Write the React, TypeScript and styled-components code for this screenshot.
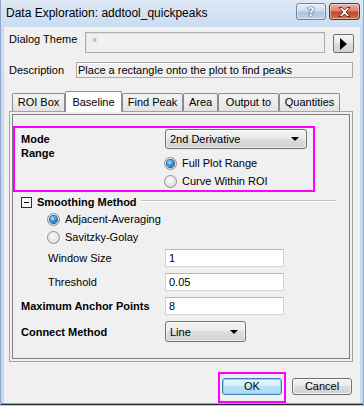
import React from "react";
import styled, { createGlobalStyle } from "styled-components";

const GlobalStyle = createGlobalStyle`
  html, body {
    margin: 0;
    padding: 0;
    background: #c4d9ef;
  }
  body {
    font-family: "Liberation Sans", Arial, sans-serif;
    font-size: 11px;
    color: #000;
  }
  * {
    box-sizing: border-box;
  }
`;

const Window = styled.div`
  width: 364px;
  height: 406px;
  display: flex;
  flex-direction: column;
  background: linear-gradient(180deg, #dfe9f6 0px, #c9dcf1 27px, #c4d9ef 100%);
  border-left: 1px solid #8fa8c6;
  border-right: 1px solid #8fa8c6;
  overflow: hidden;
`;

const TitleBar = styled.div`
  height: 27px;
  flex: none;
  display: flex;
  align-items: flex-start;
  padding: 0 3px 0 5px;
`;

const Title = styled.div`
  flex: 1;
  font-size: 12px;
  line-height: 27px;
  color: #000;
  white-space: nowrap;
`;

const CaptionButton = styled.div<{ $close?: boolean; $w: number }>`
  width: ${(p) => p.$w}px;
  height: 17px;
  margin-top: 3px;
  margin-left: 3px;
  border-radius: 3px;
  display: flex;
  align-items: center;
  justify-content: center;
  border: 1px solid ${(p) => (p.$close ? "#6e2a20" : "#6c84a3")};
  background: ${(p) =>
    p.$close
      ? "linear-gradient(180deg, #eeb3a6 0%, #dc806c 45%, #c6452b 55%, #d2704f 100%)"
      : "linear-gradient(180deg, #e8f0f9 0%, #cddced 45%, #adc4df 55%, #bcd2ea 100%)"};
  box-shadow: inset 0 0 0 1px rgba(255, 255, 255, 0.45);
`;

const HelpGlyph = styled.span`
  font-family: "DejaVu Sans", sans-serif;
  font-weight: bold;
  font-size: 13px;
  line-height: 13px;
  color: #f4f6fa;
  text-shadow: 0 0 1px #2f4360, 0 0 1px #2f4360, 0 0 1px #2f4360;
`;

const Body = styled.div`
  flex: 1;
  margin: 0 3px;
  background: #f0f0f0;
  padding: 5px 6px 0 5px;
  display: flex;
  flex-direction: column;
`;

const FrameBottom = styled.div`
  height: 3px;
  flex: none;
  background: linear-gradient(180deg, #8ea9c9 0 1px, #1b2836 1px 2px, #b9d0ea 2px);
`;

const ThemeRow = styled.div`
  display: flex;
  height: 20px;
  align-items: flex-start;
`;

const FieldLabel = styled.div<{ $w: number }>`
  width: ${(p) => p.$w}px;
  flex: none;
  line-height: 13px;
  padding-top: 1px;
  white-space: nowrap;
`;

const ThemeBox = styled.div`
  flex: 1;
  height: 21px;
  border: 1px solid #adadad;
  box-shadow: inset 1px 1px 0 #e2e2e2;
  background: #f0f0f0;
  padding: 2px 0 0 6px;
  font-size: 9px;
  line-height: 10px;
  color: #9a9a9a;
`;

const ArrowButton = styled.div`
  width: 21px;
  height: 19px;
  flex: none;
  margin: 2px 0 0 8px;
  border: 1px solid #707070;
  border-radius: 2px;
  background: linear-gradient(180deg, #f6f6f6 0%, #ebebeb 45%, #dddddd 50%, #d2d2d2 100%);
  display: flex;
  align-items: center;
  justify-content: center;
`;

const DescRow = styled.div`
  display: flex;
  height: 16px;
  margin-top: 10px;
`;

const DescBox = styled.div`
  flex: 1;
  margin-right: 1px;
  border: 1px solid #a9a9a9;
  box-shadow: inset 1px 1px 0 #ffffff;
  background: #f0f0f0;
  padding-left: 1px;
  line-height: 14px;
  white-space: nowrap;
`;

const TabStrip = styled.div`
  display: flex;
  align-items: flex-end;
  height: 20px;
  margin-top: 13px;
  padding-left: 3px;
  position: relative;
  z-index: 1;
`;

const Tab = styled.div<{ $active?: boolean; $w: number }>`
  width: ${(p) => p.$w}px;
  flex: none;
  text-align: center;
  border: 1px solid #898c95;
  border-bottom: none;
  border-radius: 2px 2px 0 0;
  white-space: nowrap;
  height: ${(p) => (p.$active ? 21 : 18)}px;
  margin-bottom: ${(p) => (p.$active ? -1 : 0)}px;
  line-height: ${(p) => (p.$active ? 18 : 17)}px;
  padding-top: ${(p) => (p.$active ? 1 : 0)}px;
  background: ${(p) =>
    p.$active ? "#ffffff" : "linear-gradient(180deg, #f4f4f4 0%, #ececec 50%, #e2e2e2 100%)"};
`;

const Panel = styled.div`
  height: 251px;
  margin-right: 1px;
  border: 1px solid #a3a3a3;
  padding: 2px;
  display: flex;
`;

const PanelInner = styled.div`
  flex: 1;
  border: 1px solid #7e7e7e;
  display: flex;
  flex-direction: column;
`;

const Highlight = styled.div`
  border: 2px solid #ff00ff;
`;

const ModeBox = styled(Highlight)`
  width: 302px;
  height: 66px;
  margin-top: 11px;
  padding: 1px 6px 0 6px;
`;

const Row = styled.div<{ $top?: number; $h?: number; $indent?: number }>`
  display: flex;
  align-items: center;
  height: ${(p) => p.$h ?? 18}px;
  margin-top: ${(p) => p.$top ?? 0}px;
  padding-left: ${(p) => p.$indent ?? 0}px;
`;

const Label = styled.div<{ $w: number; $bold?: boolean }>`
  width: ${(p) => p.$w}px;
  flex: none;
  font-weight: ${(p) => (p.$bold ? "bold" : "normal")};
  white-space: nowrap;
`;

const Combo = styled.div<{ $w: number; $h: number }>`
  width: ${(p) => p.$w}px;
  height: ${(p) => p.$h}px;
  flex: none;
  border: 1px solid #707070;
  border-radius: 3px;
  background: linear-gradient(180deg, #f3f3f3 0%, #ebebeb 45%, #dddddd 50%, #d3d3d3 100%);
  display: flex;
  align-items: center;
  padding: 0 7px 0 4px;
  box-shadow: inset 0 0 0 1px rgba(255, 255, 255, 0.6);
`;

const ComboText = styled.span`
  flex: 1;
  white-space: nowrap;
`;

const RangeRow = styled.div`
  display: flex;
  align-items: flex-start;
`;

const RangeLabel = styled(Label)`
  line-height: 12px;
  margin-top: -2px;
`;

const RadioGroup = styled.div<{ $top?: number }>`
  display: flex;
  flex-direction: column;
  margin-top: ${(p) => p.$top ?? 0}px;
`;

const RadioItem = styled.div<{ $indent?: number }>`
  display: flex;
  align-items: center;
  height: 18px;
  padding-left: ${(p) => p.$indent ?? 0}px;
  white-space: nowrap;
`;

const RadioDot = styled.span<{ $checked?: boolean }>`
  width: 13px;
  height: 13px;
  flex: none;
  margin-right: 5px;
  border-radius: 50%;
  border: 1px solid #8d8d8d;
  background: radial-gradient(circle at 40% 35%, #fbfbfb 0%, #e6e6e6 55%, #cfcfcf 100%);
  display: flex;
  align-items: center;
  justify-content: center;

  &::after {
    content: "";
    display: ${(p) => (p.$checked ? "block" : "none")};
    width: 7px;
    height: 7px;
    border-radius: 50%;
    background: radial-gradient(circle at 38% 35%, #b9ecff 0%, #3a9be0 40%, #0f4f8a 100%);
    box-shadow: 0 0 0 1px #1d5f93;
  }
`;

const GroupHeader = styled.div`
  display: flex;
  align-items: center;
  height: 14px;
  margin-top: 3px;
  padding: 0 13px 0 8px;
`;

const CollapseBox = styled.span`
  width: 11px;
  height: 11px;
  flex: none;
  border: 1px solid #2b2b2b;
  background: #fafafa;
  position: relative;
  margin-right: 5px;

  &::after {
    content: "";
    position: absolute;
    left: 2px;
    right: 2px;
    top: 4px;
    height: 1px;
    background: #000;
  }
`;

const GroupTitle = styled.span`
  font-weight: bold;
  white-space: nowrap;
`;

const GroupLine = styled.span`
  flex: 1;
  height: 2px;
  margin-left: 4px;
  margin-top: -2px;
  border-top: 1px solid #c2c2c2;
  border-bottom: 1px solid #ffffff;
`;

const TextBox = styled.div`
  width: 119px;
  height: 18px;
  flex: none;
  background: #ffffff;
  border: 1px solid #cfd2d6;
  border-top-color: #b4b7bc;
  padding-left: 3px;
  line-height: 16px;
`;

const ButtonRow = styled.div`
  display: flex;
  justify-content: flex-end;
  align-items: flex-start;
  height: 31px;
  margin-top: 10px;
  padding-right: 2px;
`;

const OkFrame = styled(Highlight)`
  width: 68px;
  height: 31px;
  padding: 4px 0 0 2px;
`;

const PushButton = styled.div<{ $default?: boolean }>`
  width: 60px;
  height: 17px;
  border-radius: 3px;
  text-align: center;
  line-height: 15px;
  border: 1px solid ${(p) => (p.$default ? "#3c7fb1" : "#707070")};
  background: ${(p) =>
    p.$default
      ? "linear-gradient(180deg, #e8f6fd 0%, #d3eefb 45%, #b9e2f8 50%, #a9daf5 100%)"
      : "linear-gradient(180deg, #f3f3f3 0%, #ebebeb 45%, #dddddd 50%, #d0d0d0 100%)"};
  box-shadow: inset 0 0 0 1px ${(p) => (p.$default ? "#8fd3f6" : "rgba(255,255,255,0.7)")};
`;

const CancelButton = styled(PushButton)`
  margin: 6px 0 0 6px;
`;

const DropArrow = () => (
  <svg width="8" height="4" viewBox="0 0 8 4">
    <path d="M0 0H8L4 4Z" fill="#000" />
  </svg>
);

const App: React.FC = () => {
  const tabs = [
    { name: "ROI Box", w: 53 },
    { name: "Baseline", w: 57, active: true },
    { name: "Find Peak", w: 61 },
    { name: "Area", w: 35 },
    { name: "Output to", w: 61 },
    { name: "Quantities", w: 61 },
  ];

  return (
    <>
      <GlobalStyle />
      <Window>
        <TitleBar>
          <Title>Data Exploration: addtool_quickpeaks</Title>
          <CaptionButton $w={30}>
            <HelpGlyph>?</HelpGlyph>
          </CaptionButton>
          <CaptionButton $w={31} $close>
            <svg width="13" height="10" viewBox="0 0 13 10">
              <path
                d="M1 0.5H4L6.5 3L9 0.5H12L8 5L12 9.5H9L6.5 7L4 9.5H1L5 5Z"
                fill="#ffffff"
                stroke="#5a1f17"
                strokeWidth="0.9"
                strokeLinejoin="round"
              />
            </svg>
          </CaptionButton>
        </TitleBar>

        <Body>
          <ThemeRow>
            <FieldLabel $w={76}>Dialog Theme</FieldLabel>
            <ThemeBox>×</ThemeBox>
            <ArrowButton>
              <svg width="7" height="12" viewBox="0 0 7 12">
                <path d="M0 0L7 6L0 12Z" fill="#000" />
              </svg>
            </ArrowButton>
          </ThemeRow>

          <DescRow>
            <Label $w={67} style={{ lineHeight: "16px" }}>
              Description
            </Label>
            <DescBox>Place a rectangle onto the plot to find peaks</DescBox>
          </DescRow>

          <TabStrip>
            {tabs.map((t) => (
              <Tab key={t.name} $w={t.w} $active={t.active}>
                {t.name}
              </Tab>
            ))}
          </TabStrip>

          <Panel>
            <PanelInner>
              <ModeBox>
                <Row $h={20}>
                  <Label $w={144} $bold>
                    Mode
                  </Label>
                  <Combo $w={142} $h={20}>
                    <ComboText>2nd Derivative</ComboText>
                    <DropArrow />
                  </Combo>
                </Row>
                <RangeRow>
                  <RangeLabel $w={143} $bold>
                    Range
                  </RangeLabel>
                  <RadioGroup $top={5}>
                    <RadioItem>
                      <RadioDot $checked />
                      Full Plot Range
                    </RadioItem>
                    <RadioItem>
                      <RadioDot />
                      Curve Within ROI
                    </RadioItem>
                  </RadioGroup>
                </RangeRow>
              </ModeBox>

              <GroupHeader>
                <CollapseBox />
                <GroupTitle>Smoothing Method</GroupTitle>
                <GroupLine />
              </GroupHeader>

              <RadioGroup $top={1}>
                <RadioItem $indent={34}>
                  <RadioDot $checked />
                  Adjacent-Averaging
                </RadioItem>
                <RadioItem $indent={34}>
                  <RadioDot />
                  Savitzky-Golay
                </RadioItem>
              </RadioGroup>

              <Row $top={3} $indent={35}>
                <Label $w={117}>Window Size</Label>
                <TextBox>1</TextBox>
              </Row>
              <Row $top={6} $indent={35}>
                <Label $w={117}>Threshold</Label>
                <TextBox>0.05</TextBox>
              </Row>
              <Row $top={6} $indent={8}>
                <Label $w={144} $bold>
                  Maximum Anchor Points
                </Label>
                <TextBox>8</TextBox>
              </Row>
              <Row $top={6} $h={21} $indent={8}>
                <Label $w={144} $bold>
                  Connect Method
                </Label>
                <Combo $w={81} $h={21}>
                  <ComboText>Line</ComboText>
                  <DropArrow />
                </Combo>
              </Row>
            </PanelInner>
          </Panel>

          <ButtonRow>
            <OkFrame>
              <PushButton $default>OK</PushButton>
            </OkFrame>
            <CancelButton>Cancel</CancelButton>
          </ButtonRow>
        </Body>
        <FrameBottom />
      </Window>
    </>
  );
};

export default App;
